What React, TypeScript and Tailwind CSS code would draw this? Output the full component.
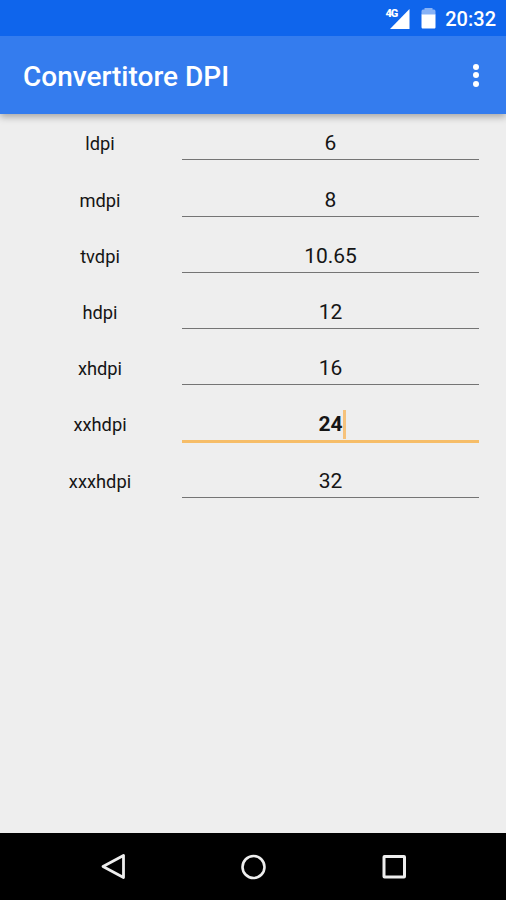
type Density = { label: string; value: string; focused?: boolean };

const densities: Density[] = [
  { label: "ldpi", value: "6" },
  { label: "mdpi", value: "8" },
  { label: "tvdpi", value: "10.65" },
  { label: "hdpi", value: "12" },
  { label: "xhdpi", value: "16" },
  { label: "xxhdpi", value: "24", focused: true },
  { label: "xxxhdpi", value: "32" },
];

function StatusBar() {
  return (
    <div className="z-20 flex h-9 shrink-0 items-center justify-end bg-[#0f65ec] pr-[10px] text-white">
      <div className="mr-[11px] flex h-[22px] items-end">
        <span className="z-10 -mr-[7px] self-start pt-px text-[11px] leading-[12px] font-black tracking-[-1px]">4G</span>
        <svg className="h-5 w-5" viewBox="0 0 20 20">
          <path d="M19.500 0V20H0Z" fill="white" />
        </svg>
      </div>
      <svg className="mr-[9px] h-[22px] w-[15px]" viewBox="0 0 15 22">
        <path d="M3.500 1H11.500V2.500H13C14 2.500 14.500 3.500 14.500 4.500V8H.5V4.500C.5 3.500 1 2.500 2 2.500H3.500Z" fill="#87b2f6" />
        <path d="M.5 7.500H14.500V20C14.500 21 14 21.500 13 21.500H2C1 21.500 .5 21 .5 20Z" fill="white" />
      </svg>
      <span className="pt-[1px] text-[20px] leading-6 font-medium">20:32</span>
    </div>
  );
}

function AppBar() {
  return (
    <header className="z-10 flex h-[78px] shrink-0 items-center justify-between bg-[#347cee] pr-[27px] pl-[23px] text-white shadow-[0_3px_7px_rgba(0,0,0,0.3)]">
      <h1 className="pt-[4px] text-[28px] leading-9 font-medium whitespace-nowrap">Convertitore DPI</h1>
      <button className="flex flex-col gap-[2.500px]" aria-label="Menu">
        <span className="size-[6px] rounded-full bg-white" />
        <span className="size-[6px] rounded-full bg-white" />
        <span className="size-[6px] rounded-full bg-white" />
      </button>
    </header>
  );
}

function DensityRow({ label, value, focused }: Density) {
  return (
    <div className="flex h-[56.200px] items-start">
      <div className="w-[200px] shrink-0 pt-[14px] text-center text-[18.300px] leading-6">{label}</div>
      <div className="-ml-[18px] w-[297px]">
        <div className={`flex items-center justify-center pt-[9px] text-[21px] leading-6 ${focused ? "h-[40.500px] font-bold" : "h-[41px]"}`}>
          <span>{value}</span>
          {focused && <span className="-mr-[3px] h-[29px] w-[3px] bg-[#f6c27b]" />}
        </div>
        <div className={focused ? "h-[3px] bg-[#f6bd68]" : "h-px bg-[#747474]"} />
      </div>
    </div>
  );
}

function NavigationBar() {
  return (
    <nav className="flex h-[67px] shrink-0 items-center justify-center gap-[112px] bg-black">
      <svg className="size-7" viewBox="0 0 28 28" fill="none" stroke="#eeeeee" strokeWidth="2.800" strokeLinejoin="round">
        <path d="M24.500 2.500V24.500L4 13.500Z" />
      </svg>
      <svg className="size-7" viewBox="0 0 28 28" fill="none" stroke="#eeeeee" strokeWidth="2.600">
        <circle cx="14.500" cy="14" r="11" />
      </svg>
      <svg className="size-7" viewBox="0 0 28 28" fill="none" stroke="#eeeeee" strokeWidth="3" strokeLinejoin="round">
        <rect x="5" y="3.500" width="20.500" height="20.500" rx=".5" />
      </svg>
    </nav>
  );
}

export default function App() {
  return (
    <div className="flex h-[900px] w-[506px] flex-col overflow-hidden bg-[#eeeeee] font-['Roboto',sans-serif] text-[#151515]">
      <StatusBar />
      <AppBar />
      <main className="flex-1 pt-[4.400px]">
        {densities.map((density) => (
          <DensityRow key={density.label} {...density} />
        ))}
      </main>
      <NavigationBar />
    </div>
  );
}
